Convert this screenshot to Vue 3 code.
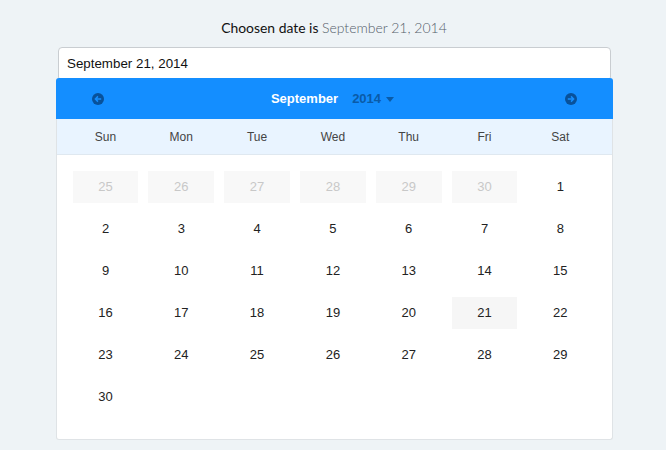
<template>
  <div class="page">
    <p class="chosen">Choosen date is <span class="chosen-value">{{ chosen }}</span></p>
    <div class="picker">
      <input class="date-input" type="text" :value="chosen" readonly />
      <div class="calendar">
        <div class="cal-head">
          <svg class="nav-icon" viewBox="0 0 12 12">
            <circle cx="6" cy="6" r="6" fill="#08519a" />
            <path d="M9.2 6H3.8M6 3.4 3.4 6 6 8.6" fill="none" stroke="#148eff" stroke-width="1.5" />
          </svg>
          <div class="cal-title">
            <span class="month">September</span>
            <span class="year">2014</span>
            <span class="caret"></span>
          </div>
          <svg class="nav-icon" viewBox="0 0 12 12">
            <circle cx="6" cy="6" r="6" fill="#08519a" />
            <path d="M2.8 6h5.4M6 3.4 8.6 6 6 8.6" fill="none" stroke="#148eff" stroke-width="1.5" />
          </svg>
        </div>
        <div class="week-row">
          <span v-for="day in weekDays" :key="day">{{ day }}</span>
        </div>
        <div class="days">
          <div
            v-for="cell in cells"
            :key="cell.key"
            class="day"
            :class="{ muted: cell.muted, selected: cell.selected }"
          >
            {{ cell.label }}
          </div>
        </div>
      </div>
    </div>
  </div>
</template>

<script setup>
const chosen = 'September 21, 2014'
const weekDays = ['Sun', 'Mon', 'Tue', 'Wed', 'Thu', 'Fri', 'Sat']

const cells = []
for (let d = 25; d <= 30; d++) {
  cells.push({ key: 'prev-' + d, label: d, muted: true })
}
for (let d = 1; d <= 30; d++) {
  cells.push({ key: 'cur-' + d, label: d, selected: d === 21 })
}
</script>

<style>
html,
body {
  background: #eef3f6;
}
</style>

<style scoped>
.page {
  height: 450px;
  overflow: hidden;
  box-sizing: border-box;
  padding-top: 18px;
  background: #eef3f6;
}

.chosen {
  margin: 0 0 10px;
  height: 19px;
  line-height: 19px;
  text-align: center;
  font-family: Lato, sans-serif;
  font-size: 13.9px;
  color: #111;
  padding-left: 2px;
}

.chosen-value {
  font-size: 14px;
  font-weight: 300;
  color: #55606b;
}

.picker {
  width: 557px;
  margin-left: 56px;
}

.date-input {
  display: block;
  box-sizing: border-box;
  width: 553px;
  height: 34px;
  margin: 0 2px -3px;
  padding: 0 8px 2px;
  border: 1px solid #c9cdd1;
  border-radius: 4px;
  background: #fff;
  font-family: "Liberation Sans", sans-serif;
  font-size: 13.35px;
  color: #111;
  outline: none;
}

.calendar {
  position: relative;
  box-sizing: border-box;
  height: 362px;
  border: 1px solid #dfe3e6;
  border-top: none;
  border-radius: 3px;
  background: #fff;
  font-family: "Liberation Sans", sans-serif;
  font-size: 13px;
  color: #222;
}

.cal-head {
  display: flex;
  align-items: center;
  justify-content: space-between;
  height: 41px;
  margin: 0 -1px;
  padding: 0 36px;
  border-radius: 3px 3px 0 0;
  background: #148eff;
}

.nav-icon {
  width: 12px;
  height: 12px;
}

.cal-title {
  display: flex;
  align-items: center;
  font-weight: bold;
  font-size: 13px;
  margin-right: 4px;
}

.month {
  color: #fff;
}

.year {
  margin-left: 14px;
  font-size: 13px;
  color: #0a5ba8;
}

.caret {
  width: 0;
  height: 0;
  margin: 1px 0 0 5px;
  border-left: 4.5px solid transparent;
  border-right: 4.5px solid transparent;
  border-top: 5px solid #0a5ba8;
}

.week-row {
  display: grid;
  grid-template-columns: repeat(7, 1fr);
  column-gap: 10px;
  align-items: center;
  height: 36px;
  box-sizing: border-box;
  padding: 0 18.8px 0 15.6px;
  border-bottom: 1px solid #dfe8f0;
  background: #e9f4ff;
  text-align: center;
  font-size: 12px;
  color: #444;
}

.days {
  display: grid;
  grid-template-columns: repeat(7, 1fr);
  grid-auto-rows: 32px;
  gap: 10px;
  padding: 16px 18.8px 0 15.6px;
}

.day {
  display: flex;
  align-items: center;
  justify-content: center;
  padding-bottom: 1px;
  box-sizing: border-box;
}

.day.muted {
  background: #f8f8f8;
  color: #c8c8c8;
}

.day.selected {
  background: #f6f6f6;
}
</style>
